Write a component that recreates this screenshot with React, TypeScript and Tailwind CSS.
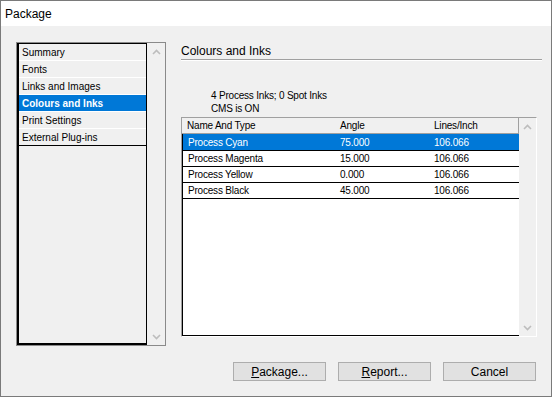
import React from "react";

const Chevron = ({ up }: { up?: boolean }) => (
  <svg width="9" height="6" viewBox="0 0 9 6" className="block">
    <path
      d={up ? "M1 5 L4.5 1.5 L8 5" : "M1 1 L4.5 4.5 L8 1"}
      fill="none"
      stroke="#bdbdbd"
      strokeWidth="1.6"
    />
  </svg>
);

const Scrollbar = ({ className }: { className?: string }) => (
  <div className={"flex flex-col justify-between items-center bg-[#f0f0f0] " + (className ?? "")}>
    <div className="h-[17px] flex items-center justify-center">
      <Chevron up />
    </div>
    <div className="h-[17px] flex items-center justify-center">
      <Chevron />
    </div>
  </div>
);

const navItems = [
  "Summary",
  "Fonts",
  "Links and Images",
  "Colours and Inks",
  "Print Settings",
  "External Plug-ins",
];

const inks = [
  ["Process Cyan", "75.000", "106.066"],
  ["Process Magenta", "15.000", "106.066"],
  ["Process Yellow", "0.000", "106.066"],
  ["Process Black", "45.000", "106.066"],
];

export default function App() {
  return (
    <div className="w-[552px] h-[397px] border border-[#7a7a7a] bg-[#f0f0f0] flex flex-col font-['Liberation_Sans',Arial,sans-serif] text-black overflow-hidden">
      {/* Title bar */}
      <div className="h-[25px] bg-white flex items-center pl-[4px] text-[12px] shrink-0">
        Package
      </div>

      {/* Body */}
      <div className="flex flex-col pt-[16px] pl-[15px] pr-[9px]">
        <div className="flex h-[304px]">
          {/* Left nav panel */}
          <div className="w-[150px] shrink-0 h-full border border-[#8a8a8a] flex">
            <div className="w-[130px] shrink-0 h-full border-l-2 border-t border-r border-b-2 border-black flex flex-col">
              {navItems.map((item, i) => {
                const selected = i === 3;
                const last = i === navItems.length - 1;
                return (
                  <div
                    key={item}
                    className={
                      "h-[17px] shrink-0 flex items-center pl-[3px] text-[10px] border-b " +
                      (last ? "border-black " : "border-white ") +
                      (selected ? "bg-[#0078d7] text-white font-bold" : "")
                    }
                  >
                    {item}
                  </div>
                );
              })}
            </div>
            <Scrollbar className="flex-1 h-full" />
          </div>

          {/* Right content */}
          <div className="ml-[15px] w-[361px] shrink-0 flex flex-col">
            <div className="h-[17px] text-[12px] leading-[14px] pt-[2px]">Colours and Inks</div>
            <div className="h-px bg-[#a0a0a0]" />
            <div className="h-px bg-white" />
            <div className="mt-[28px] pl-[30px] text-[10px] leading-[13px] tracking-[-0.2px]">
              <div>4 Process Inks; 0 Spot Inks</div>
              <div>CMS is ON</div>
            </div>

            {/* Table */}
            <div className="mt-[2px] w-[356px] h-[220px] border-t border-l border-[#a0a0a0] border-r border-r-white border-b border-b-white flex">
              <div className="w-[337px] shrink-0 h-full flex flex-col">
                <div className="h-[16px] shrink-0 flex items-center text-[10px] tracking-[-0.2px] bg-[#f0f0f0] border-b border-r border-[#a0a0a0]">
                  <div className="w-[158px] shrink-0 pl-[5px]">Name And Type</div>
                  <div className="w-[94px] shrink-0">Angle</div>
                  <div>Lines/Inch</div>
                </div>
                <div className="flex-1 bg-white border-l border-b border-black flex flex-col">
                  {inks.map((row, i) => (
                    <div
                      key={row[0]}
                      className={
                        "shrink-0 flex items-center text-[10px] tracking-[-0.2px] border-b border-black " +
                        (i === 0 ? "h-[17px] bg-[#0078d7] text-white" : "h-[16px]")
                      }
                    >
                      <div className="w-[157px] shrink-0 pl-[5px]">{row[0]}</div>
                      <div className="w-[94px] shrink-0">{row[1]}</div>
                      <div>{row[2]}</div>
                    </div>
                  ))}
                </div>
              </div>
              <Scrollbar className="flex-1 h-full" />
            </div>
          </div>
        </div>

        {/* Buttons */}
        <div className="mt-[16px] mr-[6px] flex justify-end gap-[12px]">
          <button className="w-[93px] h-[19px] bg-[#e1e1e1] border border-[#adadad] text-[12px] leading-none flex items-center justify-center">
            <span><span className="underline">P</span>ackage...</span>
          </button>
          <button className="w-[93px] h-[19px] bg-[#e1e1e1] border border-[#adadad] text-[12px] leading-none flex items-center justify-center">
            <span><span className="underline">R</span>eport...</span>
          </button>
          <button className="w-[93px] h-[19px] bg-[#e1e1e1] border border-[#adadad] text-[12px] leading-none flex items-center justify-center">
            Cancel
          </button>
        </div>
      </div>
    </div>
  );
}
